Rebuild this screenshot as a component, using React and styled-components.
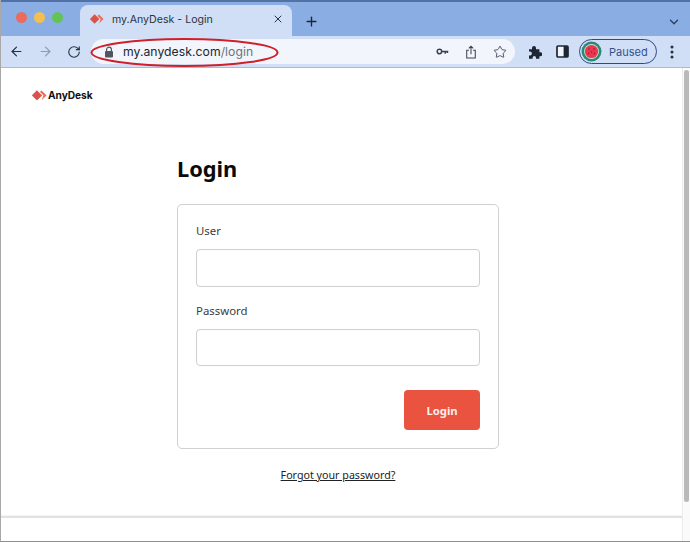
import React from 'react';
import styled, { createGlobalStyle } from 'styled-components';
import { ArrowLeft, ArrowRight, RotateCw, Star, X, Plus, ChevronDown } from 'lucide-react';

const Global = createGlobalStyle`
  html, body { margin: 0; padding: 0; background: #fff; }
  * { box-sizing: border-box; }
  body { font-family: "Noto Sans", "Liberation Sans", sans-serif; }
`;

const Win = styled.div`
  width: 690px; height: 542px; display: flex; flex-direction: column; position: relative; overflow: hidden;
  border-left: 1px solid #a8a8a8; border-bottom: 1px solid #8f8f8f;
`;
const TabStrip = styled.div`
  height: 36px; flex: none; background: #8aaee3; border-top: 2px solid #5272a6;
  display: flex; align-items: flex-end; padding-left: 15px; position: relative;
`;
const Lights = styled.div`display: flex; gap: 7px; align-self: flex-start; margin-top: 10px; width: 64px;`;
const Light = styled.span`width: 11px; height: 11px; border-radius: 50%; background: ${p => p.$c};`;
const Tab = styled.div`
  width: 212px; height: 31px; background: #d0dff5; border-radius: 8px 8px 0 0;
  display: flex; align-items: center; padding: 0 8px 3px 10px; color: #2b3340;
  font: 400 10.6px Inter, "Liberation Sans", sans-serif;
`;
const TabTitle = styled.span`flex: 1; margin-left: 8px;`;
const NewTab = styled.div`margin: 0 0 7px 12px; display: flex; color: #1d2530;`;
const Chevron = styled.div`margin: 0 9px 7px auto; display: flex; color: #2c3f5c;`;
const Toolbar = styled.div`
  height: 32px; flex: none; background: #d0dff5; border-bottom: 1px solid #a9bad2;
  display: flex; align-items: center; padding: 0 10px 0 8px;
`;
const Nav = styled.div`display: flex; align-items: center; gap: 14px; width: 72px;`;
const NavIcon = styled.div`display: flex; color: ${p => p.$dim ? '#8b9bb3' : '#27303c'};`;
const Omni = styled.div`
  width: 424px; height: 25px; margin-left: 10px; border-radius: 13px; background: #f2f6fc;
  display: flex; align-items: center; padding: 0 8px 0 13px; font: 400 12.2px Inter, "Liberation Sans", sans-serif; color: #20262e;
`;
const Url = styled.span`margin-left: 9px; flex: 1; letter-spacing: .05px;`;
const Path = styled.span`color: #6d737b;`;
const OmniIcons = styled.div`display: flex; align-items: center; gap: 16px; color: #3a4350;`;
const ExtIcons = styled.div`display: flex; align-items: center; gap: 14px; margin-left: 13px;`;
const Profile = styled.div`
  width: 78px; height: 25px; margin-left: 10px; border: 1px solid #2f4a86; border-radius: 13px;
  display: flex; align-items: center; padding-left: 1px; color: #34508f; font: 400 11px Inter, "Liberation Sans", sans-serif;
`;
const Avatar = styled.svg`margin-right: 7px; flex: none;`;
const Dots = styled.div`margin-left: 13px; display: flex; color: #27303c;`;
const Ellipse = styled.svg`position: absolute; left: 88px; top: 37px; pointer-events: none;`;

const Viewport = styled.div`flex: 1; display: flex; min-height: 0;`;
const Main = styled.main`flex: 1; min-width: 0; display: flex; flex-direction: column;`;
const Head = styled.header`display: flex; align-items: center; padding: 17px 0 0 31px; height: 37px;`;
const LogoText = styled.span`font: 700 10.2px Inter, "Liberation Sans", sans-serif; color: #111; margin-left: 1px; letter-spacing: -.05px;`;
const Column = styled.div`width: 322px; margin: 49px 0 0 176px; display: flex; flex-direction: column;`;
const Title = styled.h1`margin: 0; font-size: 21.8px; line-height: 30px; font-weight: 700; color: #0a0a0a;`;
const Card = styled.form`
  margin-top: 20px; height: 245px; border: 1px solid #d0d0d0; border-radius: 5px; padding: 17px 18px 18px;
  display: flex; flex-direction: column;
`;
const Label = styled.label`font-size: 11.4px; line-height: 18px; color: #3c3c3c; display: block; margin-bottom: 9px;`;
const Input = styled.input`
  display: block; width: 100%; height: 38px; border: 1px solid #cfcfcf; border-radius: 4px; background: #fff; margin-bottom: 15px; outline: none;
`;
const Actions = styled.div`display: flex; justify-content: flex-end; margin-top: 9px;`;
const Button = styled.button`
  width: 76px; height: 40px; border: 0; border-radius: 4px; background: #e95340; color: #fdeee9;
  font: 700 11.3px "Noto Sans", sans-serif;
`;
const Forgot = styled.a`
  margin-top: 17px; text-align: center; font-size: 10.7px; line-height: 18px; color: #222; text-decoration: underline;
`;
const Footer = styled.div`margin-top: auto; margin-bottom: 23px; height: 2px; background: #e2e2e2; box-shadow: 0 -1px 1px #f3f3f3;`;
const Scroll = styled.aside`width: 8px; flex: none; background: #fafafa; border-left: 1px solid #ececec; padding: 2px 1px 0 1px;`;
const Thumb = styled.div`height: 432px; border-radius: 3px; background: #b9b9b9;`;

const Diamond = ({ size = 14 }) => (
  <svg width={size} height={size * 0.72} viewBox="0 0 20 14.4">
    <path d="M6.6 0.4 L13.4 7.2 L6.6 14 L-0.2 7.2Z" fill="#d9534a" />
    <path d="M12.8 0.8 L19.4 7.2 L12.8 13.6 L15.4 7.2 L10.6 2.8Z" fill="#ef6a55" />
  </svg>
);

export default function App() {
  return (
    <Win>
      <Global />
      <TabStrip>
        <Lights>
          <Light $c="#ec6a5e" /><Light $c="#f4bf4f" /><Light $c="#61c554" />
        </Lights>
        <Tab>
          <Diamond />
          <TabTitle>my.AnyDesk - Login</TabTitle>
          <X size={12} strokeWidth={2} />
        </Tab>
        <NewTab><Plus size={15} strokeWidth={2.2} /></NewTab>
        <Chevron><ChevronDown size={14} strokeWidth={2.4} /></Chevron>
      </TabStrip>
      <Toolbar>
        <Nav>
          <NavIcon><ArrowLeft size={15} strokeWidth={1.9} /></NavIcon>
          <NavIcon $dim><ArrowRight size={15} strokeWidth={1.9} /></NavIcon>
          <NavIcon><RotateCw size={14} strokeWidth={1.9} /></NavIcon>
        </Nav>
        <Omni>
          <svg width="10" height="12" viewBox="0 0 10 12">
            <path d="M2.6 5V3.5a2.4 2.4 0 0 1 4.8 0V5" fill="none" stroke="#4e5661" strokeWidth="1.2" />
            <rect x="1" y="5" width="8" height="6.4" rx="1" fill="#4e5661" />
          </svg>
          <Url>my.anydesk.com<Path>/login</Path></Url>
          <OmniIcons>
            <svg width="13" height="9" viewBox="0 0 14 10">
              <circle cx="3.6" cy="5" r="2.5" fill="none" stroke="#3a4350" strokeWidth="1.7" />
              <path d="M6 5h7.4M10 5v2.4M12.4 5v1.8" fill="none" stroke="#3a4350" strokeWidth="1.7" />
            </svg>
            <svg width="12" height="14" viewBox="0 0 14 16">
              <path d="M4.5 6H2v9h10V6H9.5M7 10.5V1.5M4.4 3.8 7 1.2l2.6 2.6" fill="none" stroke="#3a4350" strokeWidth="1.2" />
            </svg>
            <Star size={14} strokeWidth={1.5} />
          </OmniIcons>
        </Omni>
        <ExtIcons>
          <svg width="14" height="14" viewBox="0 0 14 14">
            <path d="M1 4.2h3V3a2 2 0 0 1 4 0v1.2h3.4v3H12.4a2 2 0 0 1 0 4h-1v2.6H8v-1a1.7 1.7 0 0 0-3.4 0v1H1v-3.4h1a1.9 1.9 0 0 0 0-3.8H1Z" fill="#1d2633" />
          </svg>
          <svg width="13" height="13" viewBox="0 0 13 13">
            <rect x="1" y="1" width="11" height="11" rx="1" fill="#f2f6fc" stroke="#1d2633" strokeWidth="1.7" />
            <rect x="7.6" y="1" width="4.4" height="11" fill="#1d2633" />
          </svg>
        </ExtIcons>
        <Profile>
          <Avatar width="21" height="21" viewBox="0 0 21 21">
            <circle cx="10.5" cy="10.5" r="10" fill="#2b8a72" />
            <circle cx="10.5" cy="10.5" r="7.4" fill="#cfe3d8" />
            <circle cx="10.5" cy="10.5" r="6.6" fill="#e8374f" />
            <g fill="#7d1f30">
              <circle cx="8" cy="8" r=".7" /><circle cx="13" cy="8" r=".7" /><circle cx="10.5" cy="11" r=".7" />
              <circle cx="7.5" cy="12.5" r=".7" /><circle cx="13.5" cy="12.5" r=".7" />
            </g>
          </Avatar>
          Paused
        </Profile>
        <Dots>
          <svg width="4" height="14" viewBox="0 0 4 14">
            <circle cx="2" cy="2" r="1.5" fill="currentColor" />
            <circle cx="2" cy="7" r="1.5" fill="currentColor" />
            <circle cx="2" cy="12" r="1.5" fill="currentColor" />
          </svg>
        </Dots>
      </Toolbar>
      <Viewport>
        <Main>
          <Head><Diamond size={15} /><LogoText>AnyDesk</LogoText></Head>
          <Column>
            <Title>Login</Title>
            <Card onSubmit={e => e.preventDefault()}>
              <Label>User</Label>
              <Input />
              <Label>Password</Label>
              <Input type="password" />
              <Actions><Button>Login</Button></Actions>
            </Card>
            <Forgot>Forgot your password?</Forgot>
          </Column>
          <Footer />
        </Main>
        <Scroll><Thumb /></Scroll>
      </Viewport>
      <Ellipse width="192" height="32" viewBox="0 0 192 32">
        <ellipse cx="95.5" cy="15.5" rx="93" ry="13.5" fill="none" stroke="#cf1f2a" strokeWidth="2" />
      </Ellipse>
    </Win>
  );
}
